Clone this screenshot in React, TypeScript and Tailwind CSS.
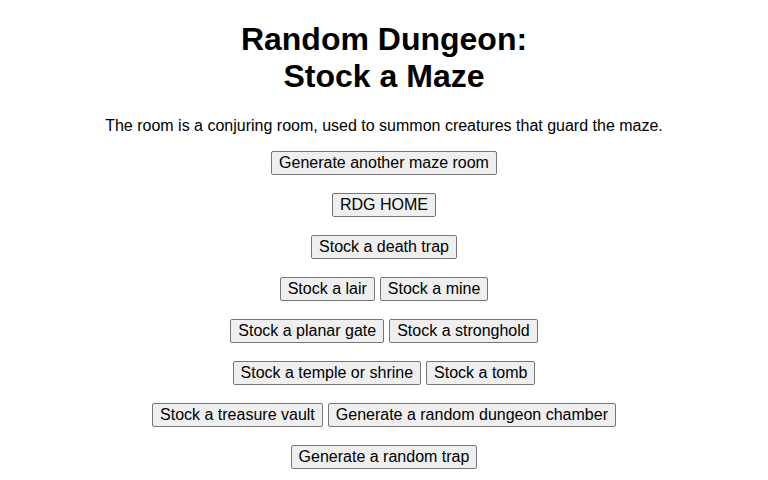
import * as React from "react";

const rows: string[][] = [
  ["Generate another maze room"],
  ["RDG HOME"],
  ["Stock a death trap"],
  ["Stock a lair", "Stock a mine"],
  ["Stock a planar gate", "Stock a stronghold"],
  ["Stock a temple or shrine", "Stock a tomb"],
  ["Stock a treasure vault", "Generate a random dungeon chamber"],
  ["Generate a random trap"],
];

function NavButton({ label }: { label: string }) {
  return (
    <button className="h-6 px-[7px] bg-[#efefef] hover:bg-[#e5e5e5] border border-[#767676] rounded-[2px] text-[16px] leading-[18px] text-black">
      {label}
    </button>
  );
}

export default function App() {
  return (
    <div className="min-h-[480px] bg-white text-black font-['Liberation_Sans',Arial,sans-serif] text-center">
      <h1 className="pt-[21px] text-[32px] font-bold leading-[37px]">
        Random Dungeon:
        <br />
        Stock a Maze
      </h1>
      <p className="mt-[22px] text-[16px] leading-[18px]">
        The room is a conjuring room, used to summon creatures that guard the maze.
      </p>
      <div className="mt-[16px] flex flex-col items-center gap-[18px]">
        {rows.map((row) => (
          <div key={row.join("|")} className="flex justify-center gap-[5px]">
            {row.map((label) => (
              <NavButton key={label} label={label} />
            ))}
          </div>
        ))}
      </div>
    </div>
  );
}
